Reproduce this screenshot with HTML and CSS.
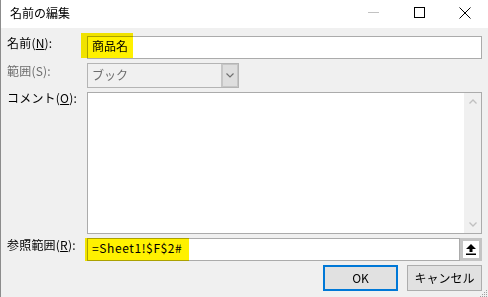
FILE: index.html
```html
<!DOCTYPE html>
<html lang="ja">
<head>
<meta charset="utf-8">
<title>名前の編集</title>
<link rel="stylesheet" href="styles.css">
</head>
<body>
<div class="dialog">
  <div class="titlebar">
    <div class="title">名前の編集</div>
    <div class="controls">
      <div class="ctl"><svg width="11" height="1" viewBox="0 0 11 1"><rect x="0" y="0" width="11" height="1" fill="#c2c2c2"/></svg></div>
      <div class="ctl"><svg width="11" height="11" viewBox="0 0 11 11"><rect x="0.5" y="0.5" width="10" height="10" fill="none" stroke="#000" stroke-width="1"/></svg></div>
      <div class="ctl"><svg width="12" height="12" viewBox="0 0 12 12"><path d="M0.5 0.5 L11.5 11.5 M11.5 0.5 L0.5 11.5" stroke="#000" stroke-width="1" fill="none"/></svg></div>
    </div>
  </div>
  <div class="content">
    <div class="row">
      <div class="lbl lbl-name">名前(<u>N</u>):</div>
      <div class="field">
        <div class="input">商品名</div>
        <span class="hl hl-name"></span>
      </div>
    </div>
    <div class="row">
      <div class="lbl lbl-scope disabled">範囲(S):</div>
      <div class="select">
        <div class="select-text">ブック</div>
        <div class="select-btn"><svg width="8" height="5" viewBox="0 0 8 5"><path d="M0.5 0.5 L4 4 L7.5 0.5" stroke="#707070" stroke-width="1.2" fill="none"/></svg></div>
      </div>
    </div>
    <div class="row">
      <div class="lbl lbl-comment">コメント(<u>O</u>):</div>
      <div class="textarea">
        <div class="scrollbar">
          <div class="sb-arrow"><svg width="8" height="5" viewBox="0 0 8 5"><path d="M0.5 4.5 L4 1 L7.5 4.5" stroke="#c0c0c0" stroke-width="1.3" fill="none"/></svg></div>
          <div class="sb-arrow"><svg width="8" height="5" viewBox="0 0 8 5"><path d="M0.5 0.5 L4 4 L7.5 0.5" stroke="#c0c0c0" stroke-width="1.3" fill="none"/></svg></div>
        </div>
      </div>
    </div>
    <div class="row">
      <div class="lbl lbl-ref">参照範囲(<u>R</u>):</div>
      <div class="field ref-field">
        <div class="input ref-input">=Sheet1!$F$2#</div>
        <div class="upbtn"><svg width="10" height="11" viewBox="0 0 10 11"><path d="M5 0 L10 5 L6.5 5 L6.5 8 L3.5 8 L3.5 5 L0 5 Z" fill="#000"/><rect x="0" y="9.5" width="10" height="1.5" fill="#000"/></svg></div>
        <span class="hl hl-ref"></span>
      </div>
    </div>
    <div class="row buttons">
      <div class="btn primary">OK</div>
      <div class="btn">キャンセル</div>
    </div>
  </div>
  <svg class="grip" width="8" height="8" viewBox="0 0 8 8">
    <rect x="6" y="1" width="1" height="1" fill="#a0a0a0"/>
    <rect x="4" y="3" width="1" height="1" fill="#a0a0a0"/>
    <rect x="6" y="3" width="1" height="1" fill="#a0a0a0"/>
    <rect x="2" y="5" width="1" height="1" fill="#a0a0a0"/>
    <rect x="4" y="5" width="1" height="1" fill="#a0a0a0"/>
    <rect x="6" y="5" width="1" height="1" fill="#a0a0a0"/>
    <rect x="0" y="7" width="1" height="1" fill="#a0a0a0"/>
    <rect x="2" y="7" width="1" height="1" fill="#a0a0a0"/>
    <rect x="4" y="7" width="1" height="1" fill="#a0a0a0"/>
    <rect x="6" y="7" width="1" height="1" fill="#a0a0a0"/>
  </svg>
</div>
</body>
</html>
```

FILE: styles.css
```css
* { box-sizing: border-box; }

body {
  margin: 0;
  font-family: "Noto Sans CJK JP", "Noto Sans", sans-serif;
  font-size: 12px;
  color: #000;
  background: #f0f0f0;
}

.dialog {
  width: 488px;
  height: 297px;
  border-left: 1px solid #8c8c8c;
  background: #f0f0f0;
  position: relative;
  display: flex;
  flex-direction: column;
  overflow: hidden;
}

.titlebar {
  height: 28px;
  flex: none;
  background: #fff;
  display: flex;
  align-items: flex-start;
}

.title {
  flex: 1;
  padding-left: 9px;
  line-height: 25px;
}

.controls { display: flex; }

.ctl {
  width: 46px;
  height: 25px;
  display: flex;
  align-items: center;
  justify-content: center;
}

.ctl svg { display: block; }

.content {
  padding: 8px 6px 0 6px;
  display: flex;
  flex-direction: column;
  gap: 4px;
}

.row { display: flex; }

.lbl {
  width: 80px;
  flex: none;
  line-height: 14px;
  white-space: nowrap;
  letter-spacing: 0.2px;
}

.lbl-name { padding-top: 0; }
.lbl-scope { padding-top: 1px; }
.lbl-comment { margin-top: -1px; }
.lbl-ref { padding-top: 0; }

.disabled { color: #6d6d6d; }

.field {
  position: relative;
  flex: 1;
  display: flex;
}

.input {
  flex: 1;
  height: 23px;
  border: 1px solid #ababab;
  background: #fff;
  padding: 0 4px;
  line-height: 17px;
  white-space: nowrap;
}

.ref-input { letter-spacing: 0.6px; }

.hl {
  position: absolute;
  background: #fff100;
  mix-blend-mode: multiply;
  pointer-events: none;
}

.hl-name { left: -6px; top: -3px; width: 52px; height: 25px; }
.hl-ref { left: -2px; top: 0; width: 104px; height: 23px; }

.select {
  width: 152px;
  height: 25px;
  border: 1px solid #b4b4b4;
  background: #f0f0f0;
  display: flex;
}

.select-text {
  flex: 1;
  padding-left: 4px;
  line-height: 22px;
  color: #6d6d6d;
}

.select-btn {
  width: 17px;
  border: 2px solid #c6c6c6;
  border-right-width: 1px;
  border-top-width: 1px;
  border-bottom-width: 1px;
  background: #dedede;
  display: flex;
  align-items: center;
  justify-content: center;
}

.select-btn svg, .sb-arrow svg, .upbtn svg { display: block; }

.textarea {
  flex: 1;
  height: 142px;
  border: 1px solid #ababab;
  background: #fff;
  display: flex;
  justify-content: flex-end;
}

.scrollbar {
  width: 17px;
  background: #f0f0f0;
  display: flex;
  flex-direction: column;
  justify-content: space-between;
}

.sb-arrow {
  height: 17px;
  display: flex;
  align-items: center;
  justify-content: center;
}

.upbtn {
  width: 22px;
  height: 23px;
  flex: none;
  border: 3px solid #c4c4c4;
  background: #fff;
  display: flex;
  align-items: center;
  justify-content: center;
}

.buttons {
  justify-content: flex-end;
  gap: 9px;
}

.btn {
  width: 75px;
  height: 26px;
  border: 1px solid #adadad;
  background: #e1e1e1;
  text-align: center;
  line-height: 24px;
}

.btn.primary {
  border: 2px solid #0078d7;
  line-height: 22px;
}

.grip {
  position: absolute;
  right: 0;
  bottom: 0;
  display: block;
}
```
